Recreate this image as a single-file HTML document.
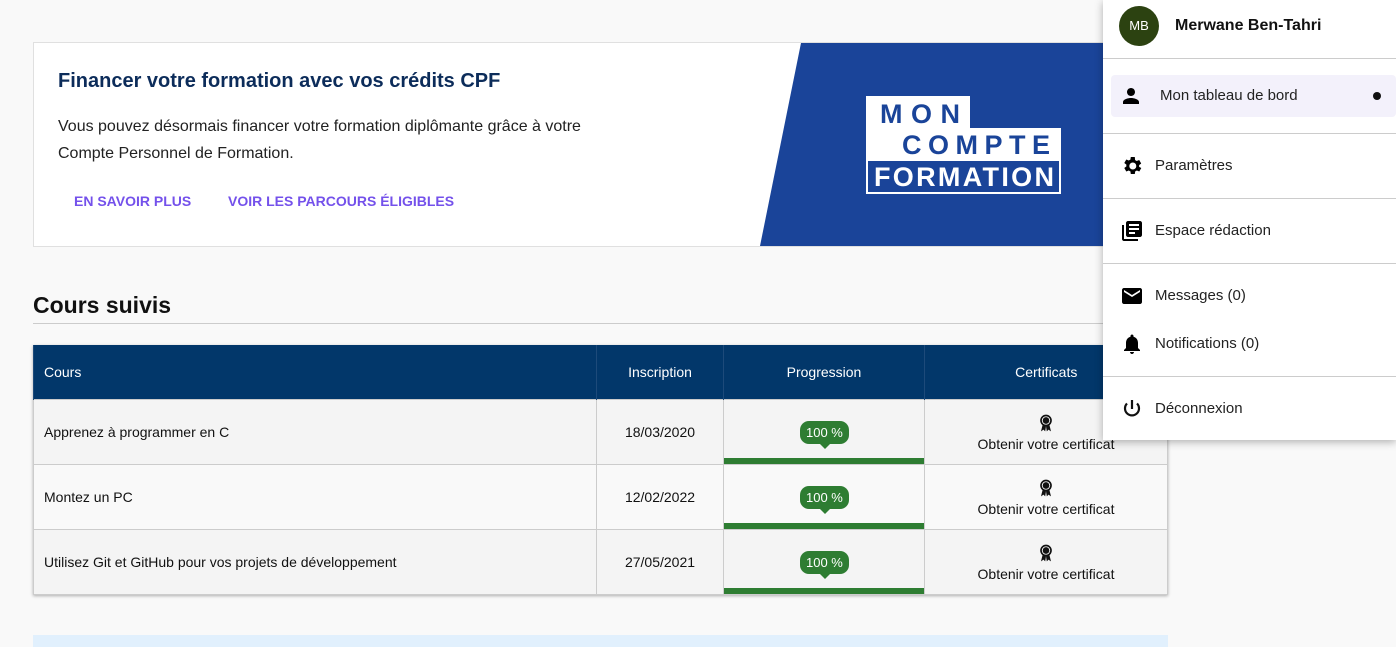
<!DOCTYPE html><html><head><meta charset="utf-8"><style>
body{margin:0;width:1396px;height:647px;background:#f9f9f9;font-family:"Liberation Sans",sans-serif;position:relative;overflow:hidden;color:#111}
.ban{position:absolute;left:33px;top:42px;width:1133px;height:203px;background:#fff;border:1px solid #e0e0e0;overflow:hidden}
.ban h2{position:absolute;left:24px;top:27px;margin:0;font-size:20px;color:#0c2c5a;font-weight:bold}
.ban p{position:absolute;left:24px;top:70px;margin:0;font-size:16px;line-height:27px;color:#222}
.lnk{position:absolute;top:150px;font-size:14px;font-weight:bold;color:#7451eb}
h3{position:absolute;left:33px;top:292px;margin:0;font-size:23px}
.hr{position:absolute;left:33px;top:323px;width:1134px;height:1px;background:#ccc}
table{position:absolute;left:33px;top:345px;width:1135px;border-collapse:collapse;font-size:14px;box-shadow:0 1px 3px rgba(0,0,0,.3);table-layout:fixed}
th{background:#02376a;color:#fff;font-weight:normal;height:54px;border-left:1px solid #1d4a7a;text-align:center;padding:0}
td{height:64px;border:1px solid #ccc;background:#f4f4f4;text-align:center;position:relative;padding:0}
tr:nth-child(odd) td{background:#f9f9f9}
.l{text-align:left;padding-left:10px}
.prog{position:absolute;left:0;right:0;bottom:0;height:6px;background:#2e7d32}
.bub{position:absolute;left:76px;top:21px;background:#2e7d32;color:#fff;border-radius:9px;padding:4px 6px;font-size:13px}
.bub:after{content:"";position:absolute;left:20px;bottom:-5px;border:5px solid transparent;border-bottom:0;border-top-color:#2e7d32}
.med{display:block;margin:0 auto 2px}
.menu{position:absolute;left:1103px;top:0;width:293px;height:440px;background:#fff;box-shadow:0 2px 8px rgba(0,0,0,.3)}
.sep{position:absolute;left:0;right:0;height:1px;background:#ccc}
.it{position:absolute;left:52px;font-size:15px;color:#222}
.ic{position:absolute;left:17px}
</style></head><body>
<div class="ban">
<h2>Financer votre formation avec vos crédits CPF</h2>
<p>Vous pouvez désormais financer votre formation diplômante grâce à votre<br>Compte Personnel de Formation.</p>
<span class="lnk" style="left:40px">EN SAVOIR PLUS</span><span class="lnk" style="left:194px">VOIR LES PARCOURS ÉLIGIBLES</span>
<svg style="position:absolute;left:0;top:0" width="1133" height="203"><polygon points="767,0 1133,0 1133,203 726,203" fill="#1a4499"/>
<polygon points="832,53 936,53 936,85 1027,85 1027,151 832,151" fill="#fff"/>
<rect x="834" y="118" width="191" height="31" fill="#1a4499"/>
<text x="846" y="80" font-family="Liberation Sans" font-weight="bold" font-size="27" fill="#1a4499" textLength="80">MON</text>
<text x="868" y="111" font-family="Liberation Sans" font-weight="bold" font-size="27" fill="#1a4499" textLength="148">COMPTE</text>
<text x="840" y="143" font-family="Liberation Sans" font-weight="bold" font-size="27" fill="#fff" textLength="180">FORMATION</text></svg>
</div>
<h3>Cours suivis</h3><div class="hr"></div>
<svg width="0" height="0" style="position:absolute"><defs><symbol id="m" viewBox="0 0 24 24"><circle cx="12" cy="9" r="7" fill="#111"/><circle cx="12" cy="9" r="4.5" fill="none" stroke="#fff" stroke-width="1"/><path d="M8 14l-2 8 3-2 2 2 1-6zM16 14l2 8-3-2-2 2-1-6z" fill="#111"/></symbol></defs></svg>
<table><colgroup><col style="width:563px"><col style="width:127px"><col style="width:201px"><col></colgroup>
<tr><th class="l">Cours</th><th>Inscription</th><th>Progression</th><th>Certificats</th></tr>
<tr><td class="l">Apprenez à programmer en C</td><td>18/03/2020</td><td><span class="bub">100 %</span><div class="prog"></div></td><td><svg class="med" width="20" height="22"><use href="#m"/></svg>Obtenir votre certificat</td></tr>
<tr><td class="l">Montez un PC</td><td>12/02/2022</td><td><span class="bub">100 %</span><div class="prog"></div></td><td><svg class="med" width="20" height="22"><use href="#m"/></svg>Obtenir votre certificat</td></tr>
<tr><td class="l">Utilisez Git et GitHub pour vos projets de développement</td><td>27/05/2021</td><td><span class="bub">100 %</span><div class="prog"></div></td><td><svg class="med" width="20" height="22"><use href="#m"/></svg>Obtenir votre certificat</td></tr></table>
<div style="position:absolute;left:33px;top:635px;width:1135px;height:12px;background:#e1f0fd"></div>
<div class="menu">
<div style="position:absolute;left:16px;top:6px;width:40px;height:40px;border-radius:50%;background:#2c4211;color:#fff;font-size:13px;text-align:center;line-height:40px">MB</div>
<div style="position:absolute;left:72px;top:17px;font-weight:bold;font-size:16px">Merwane Ben-Tahri</div>
<div class="sep" style="top:58px"></div>
<div style="position:absolute;left:8px;top:75px;width:285px;height:42px;background:#f3f1fb;border-radius:4px"></div>
<svg class="ic" style="top:84px;left:16px" width="24" height="24" viewBox="0 0 24 24"><path d="M12 12c2.2 0 4-1.8 4-4s-1.8-4-4-4-4 1.8-4 4 1.8 4 4 4zm0 2c-2.7 0-8 1.3-8 4v2h16v-2c0-2.7-5.3-4-8-4z"/></svg>
<div class="it" style="left:57px;top:87px">Mon tableau de bord</div>
<div style="position:absolute;left:270px;top:92px;width:8px;height:8px;border-radius:50%;background:#111"></div>
<div class="sep" style="top:133px"></div>
<svg class="ic" style="top:154px" width="24" height="24" viewBox="0 0 24 24"><path d="M19.1 12.9a7 7 0 000-1.8l2.1-1.6-2-3.5-2.5 1a7 7 0 00-1.6-.9L14.8 3h-4l-.4 2.6a7 7 0 00-1.6.9l-2.5-1-2 3.5 2.1 1.6a7 7 0 000 1.8l-2.1 1.6 2 3.5 2.5-1a7 7 0 001.6.9l.4 2.6h4l.4-2.6a7 7 0 001.6-.9l2.5 1 2-3.5zM12.8 15.5a3.5 3.5 0 110-7 3.5 3.5 0 010 7z"/></svg>
<div class="it" style="top:157px">Paramètres</div>
<div class="sep" style="top:198px"></div>
<svg class="ic" style="top:219px" width="24" height="24" viewBox="0 0 24 24"><path d="M4 6H2v14c0 1.1.9 2 2 2h14v-2H4V6zm16-4H8c-1.1 0-2 .9-2 2v12c0 1.1.9 2 2 2h12c1.1 0 2-.9 2-2V4c0-1.1-.9-2-2-2zm-1 9H9V9h10v2zm-4 4H9v-2h6v2zm4-8H9V5h10v2z"/></svg>
<div class="it" style="top:222px">Espace rédaction</div>
<div class="sep" style="top:263px"></div>
<svg class="ic" style="top:284px" width="24" height="24" viewBox="0 0 24 24"><path d="M20 4H4c-1.1 0-2 .9-2 2v12c0 1.1.9 2 2 2h16c1.1 0 2-.9 2-2V6c0-1.1-.9-2-2-2zm0 4l-8 5-8-5V6l8 5 8-5v2z"/></svg>
<div class="it" style="top:287px">Messages (0)</div>
<svg class="ic" style="top:332px" width="24" height="24" viewBox="0 0 24 24"><path d="M12 22c1.1 0 2-.9 2-2h-4c0 1.1.9 2 2 2zm6-6v-5c0-3.1-1.6-5.6-4.5-6.3V4c0-.8-.7-1.5-1.5-1.5s-1.5.7-1.5 1.5v.7C7.6 5.4 6 7.9 6 11v5l-2 2v1h16v-1l-2-2z"/></svg>
<div class="it" style="top:335px">Notifications (0)</div>
<div class="sep" style="top:376px"></div>
<svg class="ic" style="top:397px" width="24" height="24" viewBox="0 0 24 24" fill="none" stroke="#111" stroke-width="2.2"><path d="M12 3v9M7 6.5a7 7 0 1010 0"/></svg>
<div class="it" style="top:400px">Déconnexion</div>
</div>
</body></html>
